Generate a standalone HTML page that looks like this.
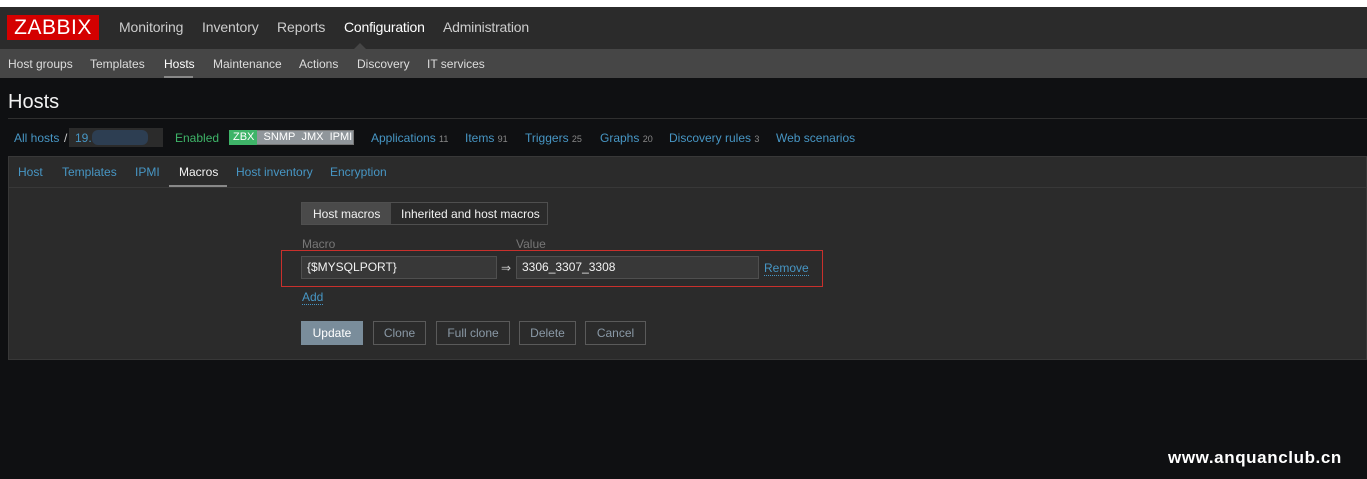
<!DOCTYPE html>
<html><head><meta charset="utf-8"><style>
*{margin:0;padding:0;box-sizing:border-box}
body{width:1367px;height:479px;background:#0f1012;font-family:"Liberation Sans",Arial,sans-serif;font-size:12px;color:#f2f2f2;position:relative;overflow:hidden}
.abs{position:absolute;white-space:nowrap}
a{color:#4796c4;text-decoration:none}
.top{position:absolute;left:0;top:0;width:1367px;height:7px;background:#fff}
.nav{position:absolute;left:0;top:7px;width:1367px;height:42px;background:#2b2b2b}
.sub{position:absolute;left:0;top:49px;width:1367px;height:29px;background:#464646}
.logo{position:absolute;left:7px;top:15px;width:92px;height:25px;background:#d40000;color:#fff;font-size:21px;line-height:25px;text-align:center;letter-spacing:0.5px}
.tabs{position:absolute;left:8px;top:156px;width:1359px;height:204px;background:#2b2b2b;border:1px solid #383838}
.tabrow{position:absolute;left:8px;top:187px;width:1359px;height:1px;background:#383838}
.inp{position:absolute;height:23px;background:#383838;border:1px solid #4f4f4f;color:#f2f2f2;font-size:12px;line-height:21px;padding-left:5px}
.btn{position:absolute;top:321px;height:24px;border:1px solid #5a5a5a;color:#8a99a6;font-size:12px;line-height:22px;text-align:center}
.dot{border-bottom:1px dotted #4796c4}
</style></head><body>
<div class="top"></div>
<div class="nav"></div>
<div class="logo">ZABBIX</div>
<span class="abs" style="left:119px;top:19px;font-size:14px;color:#ccc;letter-spacing:-0.1px">Monitoring</span>
<span class="abs" style="left:202px;top:19px;font-size:14px;color:#ccc;letter-spacing:-0.1px">Inventory</span>
<span class="abs" style="left:277px;top:19px;font-size:14px;color:#ccc;letter-spacing:-0.1px">Reports</span>
<span class="abs" style="left:344px;top:19px;font-size:14px;color:#fff;letter-spacing:-0.2px">Configuration</span>
<span class="abs" style="left:443px;top:19px;font-size:14px;color:#ccc;letter-spacing:-0.2px">Administration</span>
<div class="abs" style="left:354px;top:43px;width:0;height:0;border-left:6px solid transparent;border-right:6px solid transparent;border-bottom:6px solid #464646"></div>
<div class="sub"></div>
<span class="abs" style="left:8px;top:57px;color:#ddd">Host groups</span>
<span class="abs" style="left:90px;top:57px;color:#ddd">Templates</span>
<span class="abs" style="left:164px;top:57px;color:#fff">Hosts</span>
<div class="abs" style="left:164px;top:76px;width:29px;height:2px;background:#888"></div>
<span class="abs" style="left:213px;top:57px;color:#ddd">Maintenance</span>
<span class="abs" style="left:299px;top:57px;color:#ddd">Actions</span>
<span class="abs" style="left:357px;top:57px;color:#ddd">Discovery</span>
<span class="abs" style="left:427px;top:57px;color:#ddd">IT services</span>
<span class="abs" style="left:8px;top:91px;font-size:20px;color:#f2f2f2">Hosts</span>
<div class="abs" style="left:8px;top:118px;width:1359px;height:1px;background:#2f2f2f"></div>
<a class="abs" style="left:14px;top:131px">All hosts</a>
<div class="abs" style="left:69px;top:128px;width:94px;height:19px;background:#2b2b2b"></div>
<span class="abs" style="left:64px;top:131px;color:#ccc">/</span>
<span class="abs" style="left:75px;top:131px;color:#4796c4">19.</span>
<div class="abs" style="left:92px;top:130px;width:56px;height:15px;background:#2d3e52;border-radius:6px"></div>
<span class="abs" style="left:175px;top:131px;color:#3eb468">Enabled</span>
<div class="abs" style="left:229px;top:130px;width:125px;height:15px;background:#90969b;border:1px solid #777"></div>
<div class="abs" style="left:229px;top:130px;width:28px;height:15px;background:#3eb468"></div>
<span class="abs" style="left:233px;top:131px;color:#fff;font-size:11px">ZBX&nbsp;&nbsp;&nbsp;SNMP&nbsp;&nbsp;JMX&nbsp;&nbsp;IPMI</span>
<a class="abs" style="left:371px;top:131px">Applications <small style="color:#888;font-size:9px">11</small></a>
<a class="abs" style="left:465px;top:131px">Items <small style="color:#888;font-size:9px">91</small></a>
<a class="abs" style="left:525px;top:131px">Triggers <small style="color:#888;font-size:9px">25</small></a>
<a class="abs" style="left:600px;top:131px">Graphs <small style="color:#888;font-size:9px">20</small></a>
<a class="abs" style="left:669px;top:131px">Discovery rules <small style="color:#888;font-size:9px">3</small></a>
<a class="abs" style="left:776px;top:131px">Web scenarios</a>
<div class="tabs"></div><div class="tabrow"></div>
<a class="abs" style="left:18px;top:165px">Host</a>
<a class="abs" style="left:62px;top:165px">Templates</a>
<a class="abs" style="left:135px;top:165px">IPMI</a>
<span class="abs" style="left:179px;top:165px;color:#f2f2f2">Macros</span>
<div class="abs" style="left:169px;top:185px;width:58px;height:2px;background:#888"></div>
<a class="abs" style="left:236px;top:165px">Host inventory</a>
<a class="abs" style="left:330px;top:165px">Encryption</a>
<div class="abs" style="left:301px;top:202px;width:247px;height:23px;border:1px solid #4f4f4f;background:#2b2b2b"></div>
<div class="abs" style="left:302px;top:203px;width:89px;height:21px;background:#4a4a4a"></div>
<span class="abs" style="left:313px;top:207px;color:#f2f2f2">Host macros</span>
<span class="abs" style="left:401px;top:207px;color:#f2f2f2">Inherited and host macros</span>
<span class="abs" style="left:302px;top:237px;color:#777">Macro</span>
<span class="abs" style="left:516px;top:237px;color:#777">Value</span>
<div class="abs" style="left:281px;top:250px;width:542px;height:37px;border:1px solid #c9302c"></div>
<div class="inp" style="left:301px;top:256px;width:196px">{$MYSQLPORT}</div>
<span class="abs" style="left:501px;top:261px;color:#ccc">⇒</span>
<div class="inp" style="left:516px;top:256px;width:243px">3306_3307_3308</div>
<a class="abs dot" style="left:764px;top:261px">Remove</a>
<a class="abs dot" style="left:302px;top:290px">Add</a>
<div class="btn" style="left:301px;width:62px;background:#7a8d9b;border-color:#7a8d9b;color:#fff">Update</div>
<div class="btn" style="left:373px;width:53px">Clone</div>
<div class="btn" style="left:436px;width:74px">Full clone</div>
<div class="btn" style="left:519px;width:57px">Delete</div>
<div class="btn" style="left:585px;width:61px">Cancel</div>
<span class="abs" style="left:1168px;top:448px;font-size:17px;font-weight:bold;color:#fff;letter-spacing:0.6px">www.anquanclub.cn</span>
</body></html>
